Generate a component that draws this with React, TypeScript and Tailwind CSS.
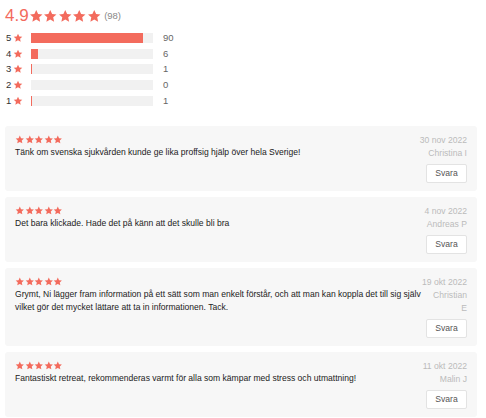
import React from "react";

const CORAL = "#f36b5d";

const distribution = [
  { stars: 5, count: 90 },
  { stars: 4, count: 6 },
  { stars: 3, count: 1 },
  { stars: 2, count: 0 },
  { stars: 1, count: 1 },
];

const reviews = [
  {
    date: "30 nov 2022",
    name: "Christina I",
    text: "Tänk om svenska sjukvården kunde ge lika proffsig hjälp över hela Sverige!",
  },
  {
    date: "4 nov 2022",
    name: "Andreas P",
    text: "Det bara klickade. Hade det på känn att det skulle bli bra",
  },
  {
    date: "19 okt 2022",
    name: "Christian E",
    text: "Grymt, Ni lägger fram information på ett sätt som man enkelt förstår, och att man kan koppla det till sig själv vilket gör det mycket lättare att ta in informationen. Tack.",
  },
  {
    date: "11 okt 2022",
    name: "Malin J",
    text: "Fantastiskt retreat, rekommenderas varmt för alla som kämpar med stress och utmattning!",
  },
];

function Star({ size }: { size: number }) {
  return (
    <svg width={size} height={size} viewBox="0 0 24 24" fill={CORAL} aria-hidden>
      <path d="M12 1.5l3.1 6.6 7.2.8-5.4 4.9 1.5 7.1L12 17.3l-6.4 3.6 1.5-7.1L1.7 8.9l7.2-.8L12 1.5z" />
    </svg>
  );
}

function Stars({ size, count = 5 }: { size: number; count?: number }) {
  return (
    <div className="flex">
      {Array.from({ length: count }).map((_, i) => (
        <Star key={i} size={size} />
      ))}
    </div>
  );
}

export default function App() {
  const total = 98;

  return (
    <div className="min-h-[418px] w-[486px] bg-white pl-[5px] pt-[5px] font-['Liberation_Sans',Arial,sans-serif]">
      {/* Summary */}
      <div className="flex items-center">
        <span className="text-[17px] leading-[22px] text-[#f36b5d]">4.9</span>
        <Stars size={14.5} />
        <span className="ml-[3px] text-[9.5px] text-[#888]">(98)</span>
      </div>

      <div className="mt-[3px] flex flex-col">
        {distribution.map((d) => (
          <div key={d.stars} className="flex h-[15.8px] items-center">
            <span className="w-[8px] pl-px text-[9.5px] text-[#333]">{d.stars}</span>
            <Star size={10} />
            <div className="ml-[8px] h-[10px] w-[122px] bg-[#f1f1f1]">
              <div className="h-full" style={{ width: `${(d.count / total) * 100}%`, background: CORAL }} />
            </div>
            <span className="ml-[10px] text-[9.5px] text-[#666]">{d.count}</span>
          </div>
        ))}
      </div>

      {/* Reviews */}
      <div className="mt-[17px] flex w-[472px] flex-col gap-[6px]">
        {reviews.map((r) => (
          <div key={r.date} className="flex rounded-[3px] bg-[#f7f7f7] px-[10px] pb-[8px] pt-[8px]">
            <div className="flex-auto">
              <div className="flex h-[12px] items-center">
                <Stars size={9.6} />
              </div>
              <p className="text-[8.55px] leading-[13px] text-[#222]">{r.text}</p>
            </div>
            <div className="flex shrink flex-col items-end text-right text-[8.6px] leading-[13px] text-[#bbb]">
              <div className="flex w-0 justify-end self-end">
                <span className="whitespace-nowrap">{r.date}</span>
              </div>
              <span>{r.name}</span>
              <button
                type="button"
                className="mt-[4px] h-[19px] w-[41px] shrink-0 rounded-[2px] border border-[#e3e3e3] bg-white text-[8.6px] text-[#555]"
              >
                Svara
              </button>
            </div>
          </div>
        ))}
      </div>
    </div>
  );
}
